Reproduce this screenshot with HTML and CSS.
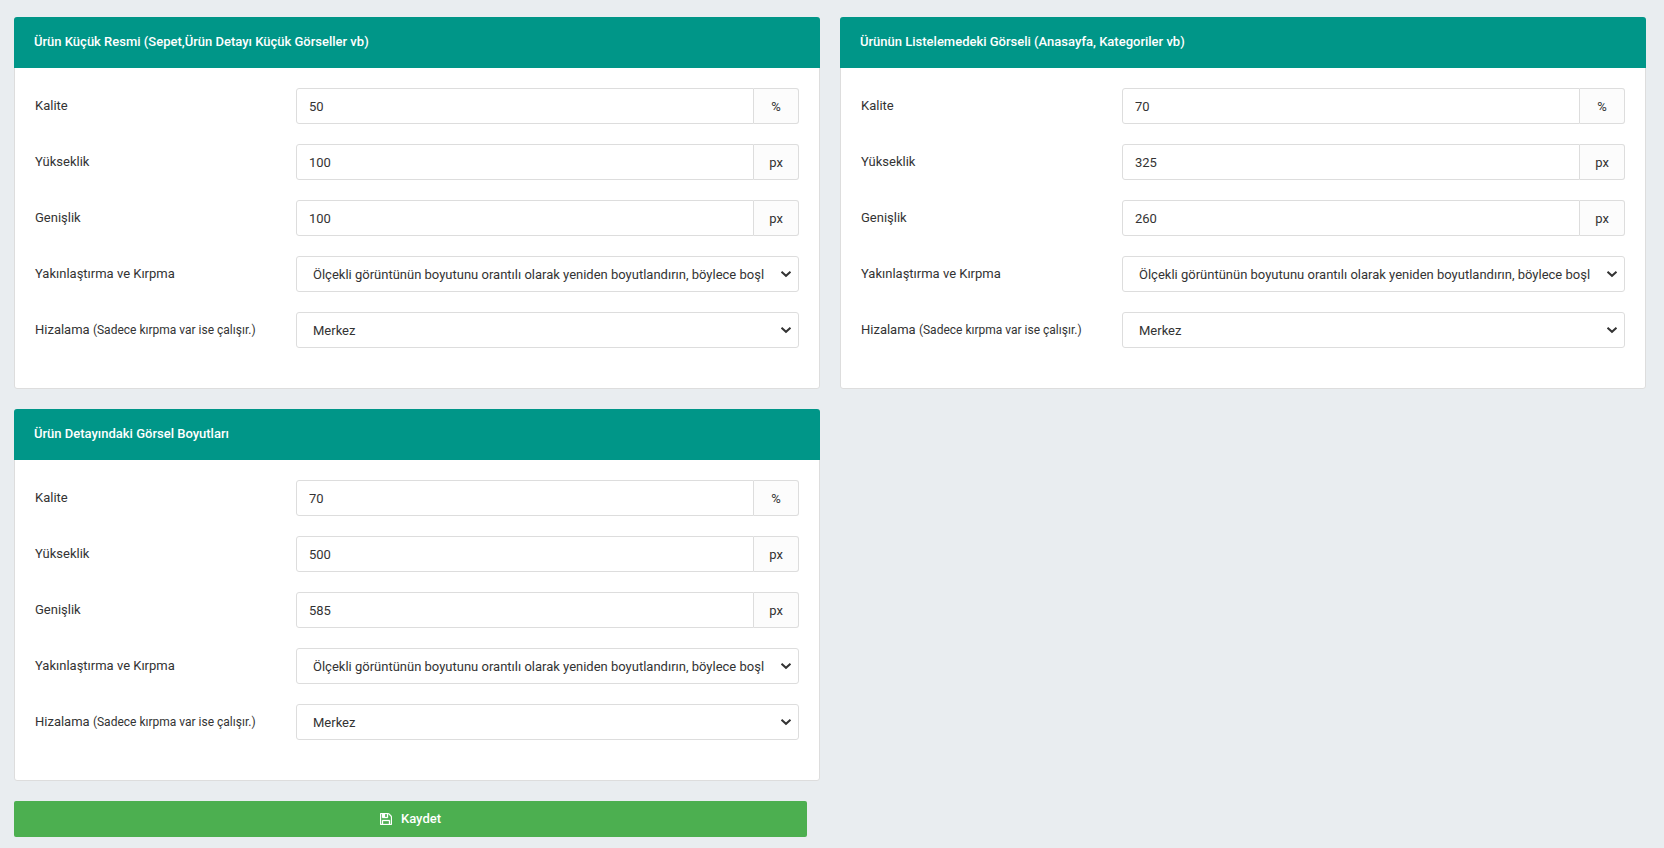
FILE: index.html
```html
<!DOCTYPE html>
<html lang="tr">
<head>
<meta charset="utf-8">
<meta name="viewport" content="width=device-width, initial-scale=1">
<title>Görsel Ayarları</title>
<link rel="stylesheet" href="styles.css">
</head>
<body>
<form class="page">
  <div class="panels">
    <section class="panel">
      <h2 class="panel-heading">Ürün Küçük Resmi (Sepet,Ürün Detayı Küçük Görseller vb)</h2>
      <div class="panel-body">
        <div class="row">
          <label class="label" for="thumb-quality">Kalite</label>
          <div class="group"><input class="input" id="thumb-quality" type="text" value="50"><span class="addon">%</span></div>
        </div>
        <div class="row">
          <label class="label" for="thumb-height">Yükseklik</label>
          <div class="group"><input class="input" id="thumb-height" type="text" value="100"><span class="addon">px</span></div>
        </div>
        <div class="row">
          <label class="label" for="thumb-width">Genişlik</label>
          <div class="group"><input class="input" id="thumb-width" type="text" value="100"><span class="addon">px</span></div>
        </div>
        <div class="row">
          <label class="label" for="thumb-crop">Yakınlaştırma ve Kırpma</label>
          <select class="select" id="thumb-crop"><option>Ölçekli görüntünün boyutunu orantılı olarak yeniden boyutlandırın, böylece boşluk kalmaz</option></select>
        </div>
        <div class="row">
          <label class="label" for="thumb-align">Hizalama <small>(Sadece kırpma var ise çalışır.)</small></label>
          <select class="select" id="thumb-align"><option>Merkez</option></select>
        </div>
      </div>
    </section>

    <section class="panel">
      <h2 class="panel-heading">Ürünün Listelemedeki Görseli (Anasayfa, Kategoriler vb)</h2>
      <div class="panel-body">
        <div class="row">
          <label class="label" for="list-quality">Kalite</label>
          <div class="group"><input class="input" id="list-quality" type="text" value="70"><span class="addon">%</span></div>
        </div>
        <div class="row">
          <label class="label" for="list-height">Yükseklik</label>
          <div class="group"><input class="input" id="list-height" type="text" value="325"><span class="addon">px</span></div>
        </div>
        <div class="row">
          <label class="label" for="list-width">Genişlik</label>
          <div class="group"><input class="input" id="list-width" type="text" value="260"><span class="addon">px</span></div>
        </div>
        <div class="row">
          <label class="label" for="list-crop">Yakınlaştırma ve Kırpma</label>
          <select class="select" id="list-crop"><option>Ölçekli görüntünün boyutunu orantılı olarak yeniden boyutlandırın, böylece boşluk kalmaz</option></select>
        </div>
        <div class="row">
          <label class="label" for="list-align">Hizalama <small>(Sadece kırpma var ise çalışır.)</small></label>
          <select class="select" id="list-align"><option>Merkez</option></select>
        </div>
      </div>
    </section>

    <section class="panel">
      <h2 class="panel-heading">Ürün Detayındaki Görsel Boyutları</h2>
      <div class="panel-body">
        <div class="row">
          <label class="label" for="detail-quality">Kalite</label>
          <div class="group"><input class="input" id="detail-quality" type="text" value="70"><span class="addon">%</span></div>
        </div>
        <div class="row">
          <label class="label" for="detail-height">Yükseklik</label>
          <div class="group"><input class="input" id="detail-height" type="text" value="500"><span class="addon">px</span></div>
        </div>
        <div class="row">
          <label class="label" for="detail-width">Genişlik</label>
          <div class="group"><input class="input" id="detail-width" type="text" value="585"><span class="addon">px</span></div>
        </div>
        <div class="row">
          <label class="label" for="detail-crop">Yakınlaştırma ve Kırpma</label>
          <select class="select" id="detail-crop"><option>Ölçekli görüntünün boyutunu orantılı olarak yeniden boyutlandırın, böylece boşluk kalmaz</option></select>
        </div>
        <div class="row">
          <label class="label" for="detail-align">Hizalama <small>(Sadece kırpma var ise çalışır.)</small></label>
          <select class="select" id="detail-align"><option>Merkez</option></select>
        </div>
      </div>
    </section>
  </div>

  <button class="save" type="button">
    <svg class="save-icon" viewBox="0 0 1536 1536" aria-hidden="true">
      <path fill="currentColor" stroke="currentColor" stroke-width="40" d="M384 1408h768v-384H384zm896 0h128V512q0-14-10-38.500t-20-34.500l-281-281q-10-10-34-20t-39-10v416q0 40-28 68t-68 28H352q-40 0-68-28t-28-68V128H128v1280h128V992q0-40 28-68t68-28h832q40 0 68 28t28 68zM896 480V160q0-13-9.500-22.500T864 128H672q-13 0-22.500 9.500T640 160v320q0 13 9.500 22.500T672 512h192q13 0 22.500-9.500T896 480zm640 32v928q0 40-28 68t-68 28H96q-40 0-68-28t-28-68V96q0-40 28-68T96 0h928q40 0 88 20t76 48l280 280q28 28 48 76t20 88z"/>
    </svg>
    Kaydet
  </button>
</form>
</body>
</html>
```
FILE: styles.css
```css
* {
  box-sizing: border-box;
}

body {
  margin: 0;
  background: #e9edf0;
  color: #333;
  font-family: Roboto, "Noto Sans", sans-serif;
  font-size: 13px;
  line-height: 20px;
}

.page {
  padding: 17px 18px 11px 14px;
}

.panels {
  display: grid;
  grid-template-columns: 1fr 1fr;
  gap: 20px;
}

.panel {
  background: #fff;
  border: 1px solid #ddd;
  border-radius: 3px;
}

.panel-heading {
  margin: -1px -1px 0;
  padding: 15px 20px 16px;
  border-radius: 3px 3px 0 0;
  background: #009688;
  color: #fff;
  font-size: 13px;
  font-weight: 500;
  line-height: 20px;
}

.panel-body {
  padding: 20px;
}

.row {
  display: grid;
  grid-template-columns: 261px 1fr;
  margin-bottom: 20px;
}

.label {
  padding-top: 8px;
}

.label small {
  font-size: 12px;
}

.group {
  display: flex;
}

.input,
.select {
  min-width: 0;
  width: 100%;
  height: 36px;
  margin: 0;
  border: 1px solid #ddd;
  border-radius: 3px;
  background-color: #fff;
  color: #333;
  font: inherit;
}

.input {
  flex: 1;
  padding: 7px 12px;
  border-radius: 3px 0 0 3px;
}

.select {
  appearance: none;
  padding: 8px 34px 6px 16px;
  background-image: url("data:image/svg+xml,%3Csvg xmlns='http://www.w3.org/2000/svg' viewBox='0 0 12 8'%3E%3Cpath d='M1.500 1.800 6 5.800l4.500-4' fill='none' stroke='%23333' stroke-width='2'/%3E%3C/svg%3E");
  background-position: right 6px center;
  background-repeat: no-repeat;
  background-size: 12px 8px;
}

.addon {
  width: 45px;
  height: 36px;
  padding: 8px 0 6px;
  border: 1px solid #ddd;
  border-left: 0;
  border-radius: 0 3px 3px 0;
  background: #fcfcfc;
  text-align: center;
}

.save {
  display: flex;
  align-items: center;
  justify-content: center;
  gap: 9px;
  width: calc(50% - 23px);
  height: 36px;
  margin-top: 20px;
  padding: 0;
  border: 0;
  border-radius: 2px;
  background: #4caf50;
  color: #fff;
  font: inherit;
  font-weight: 500;
}

.save-icon {
  width: 12px;
  height: 12px;
}
```
